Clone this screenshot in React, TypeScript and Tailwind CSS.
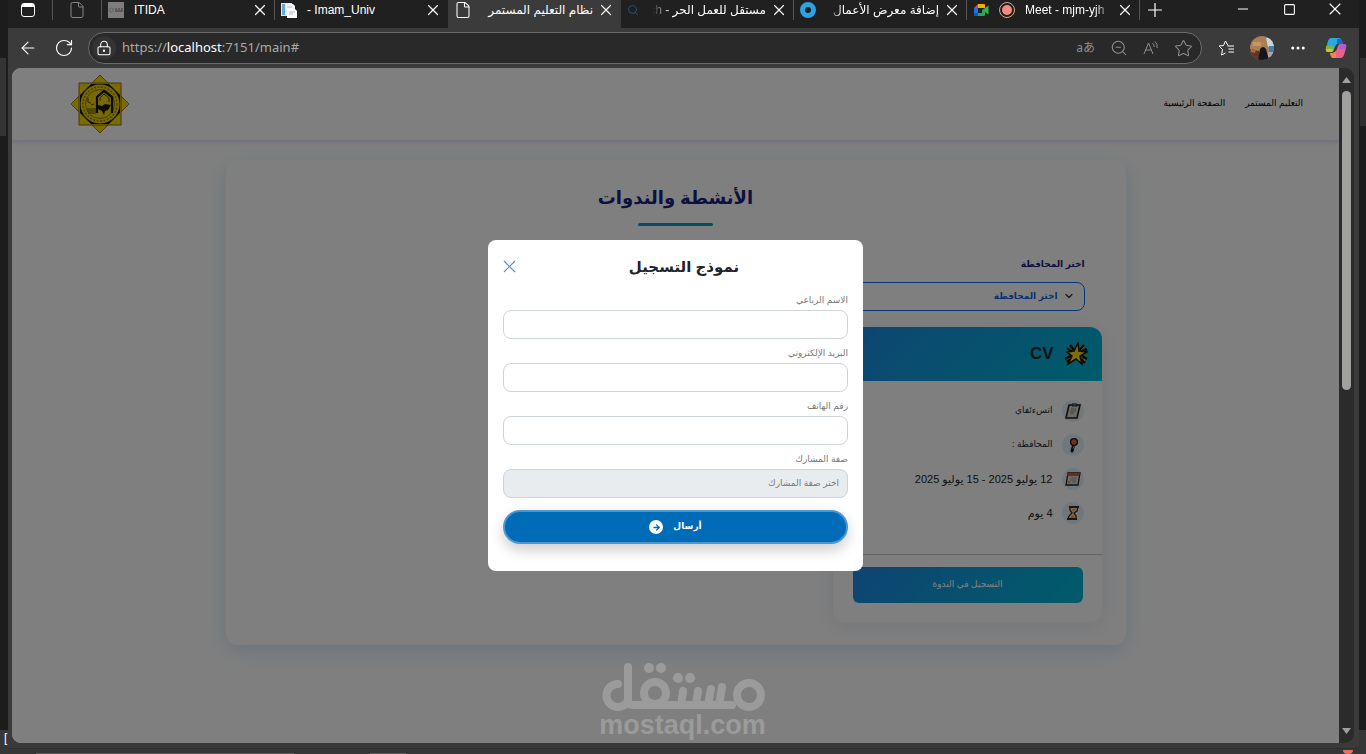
import React from "react";
import {
  ArrowLeft,
  ArrowRight,
  ChevronDown,
  File,
  LockKeyhole,
  Minus,
  MoreHorizontal,
  Plus,
  RotateCw,
  Search,
  Square,
  Star,
  X,
  ZoomOut,
} from "lucide-react";

const MeetIcon = () => (
  <svg width="16" height="16" viewBox="0 0 16 16" aria-hidden="true">
    <path d="M1 6l4-4v4z" fill="#e94235" />
    <path d="M5 2h6q1 0 1 1v3H5z" fill="#f6ad01" />
    <path d="M1 6h4v5H1z" fill="#1a73e8" />
    <path d="M1 11h4v3H2q-1 0-1-1z" fill="#1557c0" />
    <path d="M5 11h4V8l3-2v7q0 1-1 1H5z" fill="#2aa650" />
    <path d="M12 6l3.5-2.5v9L12 10z" fill="#3fae5a" />
  </svg>
);

const ItidaIcon = () => (
  <svg width="16" height="16" viewBox="0 0 16 16" aria-hidden="true">
    <path d="M0 0h16v16H0z" fill="#7d7d7d" />
    <circle cx="3.5" cy="8" r="2" fill="none" stroke="#5a5f78" />
    <path d="M7 7h2M10 7h2M13 7h2M7 9h8" stroke="#5b4a4e" strokeWidth="1.4" />
  </svg>
);

const ImamIcon = () => (
  <svg width="16" height="16" viewBox="0 0 16 16" aria-hidden="true">
    <path d="M0 1h11v13H0z" fill="#dfe8f1" />
    <path d="M1 2h3v11H1z" fill="#6ba6d6" />
    <path d="M5 2h7l2 2v4H5z" fill="#f4f6f8" />
    <path d="M6 7h8l2 2v7H6z" fill="#fafafa" />
    <path d="M6 5h5M8 10h6M8 12h4" stroke="#b4bcc6" />
  </svg>
);

const CopilotIcon = () => (
  <svg width="22" height="22" viewBox="0 0 22 22" aria-hidden="true">
    <path d="M6 1h8q2 0 3 3l1 3h-5q-2 0-3 3l-2 5H3q-3 0-2-4l2-7q1-3 3-3z" fill="#29a9e0" />
    <path d="M1 9h8l-2 6H3q-3 0-2-4z" fill="#7bb53c" />
    <path d="M1 12h7l-1 3H3q-2 0-2-3z" fill="#f0b429" />
    <path d="M12 2h3q2 0 3 5h-5l-1 2z" fill="#1769c9" />
    <path d="M16 7h3q3 0 2 4l-2 7q-1 3-3 3H8q-2 0-3-5h3q2 0 3-3l2-5q1-1 3-1z" fill="#e8628c" />
    <path d="M16 7h3q3 0 2 4v1h-7l1-4z" fill="#b05bd6" />
    <path d="M5 16h3l3-2v7H8q-2 0-3-5z" fill="#f08a3c" />
    <path d="M10 10l2-3h2l-3 7-2 1z" fill="#3a3a3a" />
  </svg>
);

const Avatar = () => (
  <svg width="24" height="24" viewBox="0 0 24 24" role="img" aria-label="Profile">
    <defs>
      <clipPath id="avatar">
        <circle cx="12" cy="12" r="12" />
      </clipPath>
    </defs>
    <g clipPath="url(#avatar)">
      <path d="M0 0h24v24H0z" fill="#a98055" />
      <path d="M16 2h8v9h-6z" fill="#c9d3dc" />
      <path d="M19 10h5v6h-5z" fill="#3f7fb5" />
      <path d="M0 13l9 2 2 9H0z" fill="#5e3a24" />
      <path d="M1 13l5 1-1 3-4-1z" fill="#b5623a" />
      <path d="M3 6h8v4H3z" fill="#c9965c" />
      <path d="M10 13q3-4 6 0l3 11H8z" fill="#16161a" />
      <path d="M18 16h5v5h-5z" fill="#a5a8ac" />
    </g>
  </svg>
);

const UniversityLogo = () => (
  <svg width="60" height="60" viewBox="0 0 60 60" role="img" aria-label="University logo">
    <path d="M30 1L59 30 30 59 1 30z" fill="#f5d800" stroke="#a8701c" />
    <path d="M9 9h42v42H9z" fill="#f5d800" stroke="#8d6a1c" />
    <path d="M21 10h18l11 11v18L39 50H21L10 39V21z" fill="#141414" />
    <circle cx="30" cy="30" r="19.5" fill="#f0d400" />
    <circle cx="30" cy="30" r="17" fill="none" stroke="#8a7b18" strokeDasharray="2 1.5" strokeWidth="1.5" />
    <circle cx="30" cy="30" r="14.5" fill="#f0d400" stroke="#8a7b18" />
    <path d="M27 39V23l7-6 8 6v16" fill="none" stroke="#141414" strokeWidth="2.2" />
    <path d="M30 27v-3l4-4 5 4v4" fill="none" stroke="#5a4f10" />
    <path d="M28 31l4 1 3-2 6 1-3 5-3 1-1 4-2-4-4-2z" fill="#141414" />
    <path d="M18 24v4l3 1M21 31l3-1M17 35h9M17 37h9M18 39h8" stroke="#5a4f10" fill="none" />
  </svg>
);

const SparkIcon = () => (
  <svg width="24" height="24" viewBox="0 0 24 24" aria-hidden="true">
    <path d="M3 6l5 3M6 3l4 5M20 3l-4 5M23 7l-5 2M1 17l6-3M3 20l5-5M17 17l4 4M18 14l5 3" stroke="#1a1200" strokeWidth="2.6" />
    <path d="M4 5l5 4M20 5l-3 3M3 18l5-3M18 16l3 3" stroke="#c9801d" strokeWidth="1" />
    <path
      d="M14 1l1 8 8 1-7 4 2 8-6-5-8 5 4-8-5-4 7-1z"
      fill="#ffd91f"
      stroke="#1a1200"
      strokeWidth="1.5"
    />
  </svg>
);

const ClipboardIcon = () => (
  <svg width="16" height="16" viewBox="0 0 16 16" aria-hidden="true">
    <path d="M4 2h11l-3 13H1z" fill="#d8d4cc" stroke="#2d1c12" strokeWidth="1.6" />
    <path d="M7 1h5v2H7z" fill="#9a9a9a" stroke="#222" />
    <path d="M6 6h5M5 8h6M5 10h4" stroke="#8a8a8a" />
  </svg>
);

const PinIcon = () => (
  <svg width="16" height="16" viewBox="0 0 16 16" aria-hidden="true">
    <path d="M9 7L7 14" stroke="#111" strokeWidth="3" strokeLinecap="round" />
    <circle cx="9" cy="5" r="3.4" fill="#f0603c" stroke="#201010" strokeWidth="1.4" />
    <path d="M9 9l-1 3" stroke="#aaa" />
  </svg>
);

const CalendarIcon = () => (
  <svg width="16" height="16" viewBox="0 0 16 16" aria-hidden="true">
    <path d="M3 2h12l-2 12H1z" fill="#dcd8d4" stroke="#222" strokeWidth="1.3" />
    <path d="M3 2h12l-1 3H2z" fill="#d8523a" />
    <path d="M6 7h6M5 9h6M7 11h4" stroke="#999" />
    <path d="M3 10h2v2H3z" fill="#ef8b38" />
  </svg>
);

const HourglassIcon = () => (
  <svg width="16" height="16" viewBox="0 0 16 16" aria-hidden="true">
    <path d="M5 2h8l-1 4-3 2 2 3v3H3l1-3 3-3-2-3z" fill="#f0d9b8" stroke="#4a2410" strokeWidth="1.3" />
    <path d="M4 2h10M2 14h10" stroke="#4a2410" strokeWidth="2" />
    <path d="M7 4h4L8 7zM5 13l3-3 2 3z" fill="#f0a52c" />
  </svg>
);

const WatermarkLogo = () => (
  <svg width="166" height="50" viewBox="0 0 166 50" aria-hidden="true">
    <g fill="none" stroke="#9b9b9b" strokeWidth="8" strokeLinecap="round">
      <path d="M18 22a11.500 11.500 0 1 0 10 17M28 5v34q0 4 5 4h99" />
      <circle cx="55" cy="31" r="11" />
      <circle cx="149" cy="33" r="12" />
      <path d="M83 29l-2 14M98 29l-2 14M111 27l-3 16M122 25l-3 18" />
    </g>
    <g fill="#9b9b9b">
      <circle cx="49" cy="6" r="5" />
      <circle cx="61" cy="6" r="5" />
      <circle cx="78" cy="16" r="5" />
      <circle cx="90" cy="16" r="5" />
    </g>
  </svg>
);

const tabs = [
  { id: "itida", title: "ITIDA", divider: true, icon: <ItidaIcon /> },
  { id: "imam", title: "- Imam_Univ", icon: <ImamIcon /> },
  {
    id: "system",
    title: "نظام التعليم المستمر",
    rtl: true,
    active: true,
    icon: <File size={18} strokeWidth={1.4} />,
  },
  {
    id: "mostaql",
    title: "مستقل للعمل الحر - ch",
    rtl: true,
    faded: true,
    divider: true,
    icon: <Search size={12} className="text-[#1c5480]" />,
  },
  {
    id: "portfolio",
    title: "إضافة معرض الأعمال",
    rtl: true,
    faded: true,
    divider: true,
    icon: <span className="block size-4 rounded-full border-[5px] border-[#2ba3e3]" />,
  },
  {
    id: "meet",
    title: "Meet - mjm-yjh",
    faded: true,
    divider: true,
    icon: (
      <>
        <MeetIcon />
        <span className="flex size-4 items-center justify-center rounded-full border border-[#e0a183]">
          <span className="size-2.5 rounded-full bg-[#f28b82]" />
        </span>
      </>
    ),
  },
];

const details = [
  { id: "about", text: "اتسءئفاي", size: "text-[9px]", icon: <ClipboardIcon /> },
  { id: "city", text: "المحافظة :", size: "text-[9px]", icon: <PinIcon /> },
  { id: "dates", text: "12 يوليو 2025 - 15 يوليو 2025", size: "text-[11px]", icon: <CalendarIcon /> },
  { id: "length", text: "4 يوم", size: "text-[11px]", icon: <HourglassIcon /> },
];

const fields = [
  { id: "full-name", label: "الاسم الرباعي", type: "text" },
  { id: "email", label: "البريد الإلكتروني", type: "email" },
  { id: "phone", label: "رقم الهاتف", type: "tel" },
];

const tabTitleClass = (tab) => {
  if (!tab.faded) return "min-w-0 flex-1 whitespace-nowrap text-xs";
  return tab.rtl
    ? "min-w-0 flex-1 whitespace-nowrap text-xs mask-l-from-85%"
    : "min-w-0 flex-1 whitespace-nowrap text-xs mask-r-from-80%";
};

const TabStrip = () => (
  <div className="flex h-7 items-start bg-[#202020] text-white">
    <button aria-label="Tab actions" className="flex h-5 w-[45px] items-center justify-center border-r border-[#555] pr-1">
      <svg width="14" height="14" viewBox="0 0 14 14">
        <rect x="0.5" y="0.5" width="13" height="13" rx="2.5" fill="none" stroke="#fff" />
        <path d="M1 1h12v3H1z" fill="#fff" />
      </svg>
    </button>
    <button aria-label="Pinned tab" className="flex h-5 w-[49px] items-center justify-center border-r border-[#555] text-[#8a8a8a]">
      <File size={18} strokeWidth={1.3} />
    </button>
    {tabs.map((tab) => (
      <div
        key={tab.id}
        className={
          tab.active
            ? "flex h-7 w-[173px] items-start bg-[#3b3b3b]"
            : "flex h-7 w-[173px] items-start"
        }
      >
        <div
          className={
            tab.divider
              ? "flex h-5 w-full items-center gap-2.5 border-r border-[#555] pr-2 pl-1.5"
              : "flex h-5 w-full items-center gap-2.5 pr-[9px] pl-1.5"
          }
        >
          <span className="flex min-w-4 shrink-0 items-center gap-2.5">{tab.icon}</span>
          <span dir={tab.rtl ? "rtl" : "ltr"} className={tabTitleClass(tab)}>
            {tab.title}
          </span>
          <button aria-label="Close tab" className="-mr-[3px] -ml-1.5 shrink-0">
            <X size={18} strokeWidth={1.6} />
          </button>
        </div>
      </div>
    ))}
    <button aria-label="New tab" className="ml-1 flex h-5 items-center">
      <Plus size={22} strokeWidth={1.3} />
    </button>
    <div className="ml-auto flex h-[18px] items-center pr-px">
      <button aria-label="Minimize" className="flex w-[46px] justify-center">
        <Minus size={16} strokeWidth={1.5} />
      </button>
      <button aria-label="Maximize" className="flex w-[46px] justify-center">
        <Square size={13} strokeWidth={2} />
      </button>
      <button aria-label="Close" className="flex w-[46px] justify-center">
        <X size={20} strokeWidth={1.4} />
      </button>
    </div>
  </div>
);

const Toolbar = () => (
  <div className="flex h-10 items-center pr-3 pl-2.5 text-white">
    <button aria-label="Back" className="flex w-5 justify-center">
      <ArrowLeft size={22} strokeWidth={1.3} />
    </button>
    <button aria-label="Refresh" className="mr-3.5 ml-4 flex w-5 justify-center">
      <RotateCw size={20} strokeWidth={1.4} />
    </button>
    <div className="flex h-8 flex-1 items-center rounded-full border border-[#6b6b6b] bg-[#292929] pr-2 pl-[3px] text-[#8f8f8f]">
      <span className="flex size-6 items-center justify-center rounded-full bg-[#333] text-white">
        <LockKeyhole size={16} strokeWidth={1.6} />
      </span>
      <input
        aria-label="Address"
        type="text"
        className="sr-only"
        defaultValue="https://localhost:7151/main#"
      />
      <span className="ml-1.5 flex-1 font-['Noto_Sans',sans-serif] text-[13px] text-[#a9a9a9]">
        https://<span className="text-white">localhost</span>:7151/main#
      </span>
      <div className="flex items-center gap-[15px]">
        <button aria-label="Translate" className="font-['Noto_Sans','Noto_Sans_CJK_JP',sans-serif] text-xs">
          aあ
        </button>
        <button aria-label="Zoom">
          <ZoomOut size={18} strokeWidth={1.4} />
        </button>
        <button aria-label="Read aloud">
          <svg width="16" height="16" viewBox="0 0 16 16" fill="none" stroke="currentColor">
            <path d="M1 14L5.5 3 10 14M2.6 10h5.8M9.5 3q2 1.5 1.5 4M12 1.500q3 2.500 2 6.500" />
          </svg>
        </button>
        <button aria-label="Add to favorites">
          <Star size={19} strokeWidth={1.3} />
        </button>
      </div>
    </div>
    <div className="ml-4 flex items-center gap-[15px]">
      <button aria-label="Favorites">
        <svg width="17" height="17" viewBox="0 0 17 17" fill="none" stroke="currentColor" strokeLinejoin="round">
          <path d="M10 5.500L7.500 1 5.500 5.500 1 6l3.500 3.500L3.500 15l4-2M9.500 6H16M10.500 9H16M10.500 12H16" />
        </svg>
      </button>
      <button aria-label="Profile">
        <Avatar />
      </button>
      <button aria-label="Settings">
        <MoreHorizontal size={18} strokeWidth={2} />
      </button>
      <button aria-label="Copilot" className="ml-[3px]">
        <CopilotIcon />
      </button>
    </div>
  </div>
);

const SeminarCard = () => (
  <article className="w-[269px] overflow-hidden rounded-xl bg-white shadow-[0_4px_20px_rgba(0,60,130,0.1)]">
    <header className="flex h-[54px] items-center gap-2.5 bg-linear-135 from-[#1e88e5] to-[#00b8d4] px-3.5">
      <SparkIcon />
      <h3 className="text-[17px] font-bold text-[#212529]">CV</h3>
    </header>
    <ul className="flex flex-col gap-3 px-[18px] pt-[19px] pb-[30px] text-[#212529]">
      {details.map((item) => (
        <li key={item.id} className="flex h-[22px] items-center gap-[9px]">
          <span className="flex size-[22px] items-center justify-center rounded-full bg-[#e3f0fa]">{item.icon}</span>
          <span className={item.size}>{item.text}</span>
        </li>
      ))}
    </ul>
    <footer className="border-t border-[#c8c8c8] pt-3 pr-[19px] pb-[19px] pl-5">
      <button className="h-9 w-full rounded-md bg-linear-135 from-[#1e88e5] to-[#00b8d4] text-[9px] text-white">
        التسجيل في الندوة
      </button>
    </footer>
  </article>
);

const RegisterDialog = () => (
  <div
    role="dialog"
    aria-labelledby="register-title"
    className="w-[375px] rounded-lg bg-white px-[15px] pt-3 pb-[27px] text-[#777]"
  >
    <div className="flex h-[30px] items-center">
      <h2 id="register-title" className="flex-1 text-center text-[15px] font-bold text-[#212529]">
        نموذج التسجيل
      </h2>
      <button aria-label="إغلاق" className="-ml-1 pb-0.5 text-[#5b8fc7]">
        <X size={21} strokeWidth={1.3} />
      </button>
    </div>
    <form className="mt-2.5">
      {fields.map((field) => (
        <div key={field.id} className="mb-1.5">
          <label htmlFor={field.id} className="block h-[18px] text-[9px] leading-4">
            {field.label}
          </label>
          <input
            id={field.id}
            type={field.type}
            className="block h-[29px] w-full rounded-lg border border-[#ced4da] px-2.5 text-xs"
          />
        </div>
      ))}
      <label htmlFor="role" className="block h-[18px] text-[9px] leading-4">
        صفة المشارك
      </label>
      <select
        id="role"
        disabled
        className="block h-[29px] w-full appearance-none rounded-lg border border-[#ced4da] bg-[#e9ecef] px-2 text-[9px] opacity-100"
      >
        <option>اختر صفة المشارك</option>
      </select>
      <button
        type="button"
        className="mt-3 flex h-[34px] w-full items-center justify-center gap-2.5 rounded-full border-2 border-[#4d97cd] bg-[#006bb6] text-[9px] font-bold text-white shadow-[0_6px_14px_rgba(0,0,0,0.2)]"
      >
        أرسال
        <span className="flex size-3.5 items-center justify-center rounded-full bg-white text-[#006bb6]">
          <ArrowRight size={9} strokeWidth={3.5} />
        </span>
      </button>
    </form>
  </div>
);

const SitePage = () => (
  <div dir="rtl" className="relative flex min-w-0 flex-1 flex-col bg-white">
    <header className="flex h-[72px] items-center justify-between pr-9 pl-[58px] shadow-[0_2px_4px_rgba(30,50,160,0.15)]">
      <nav className="flex gap-5 text-[9px] text-black">
        <a href="#main">التعليم المستمر</a>
        <a href="#home">الصفحة الرئيسية</a>
      </nav>
      <UniversityLogo />
    </header>

    <main className="mx-auto mt-5 w-[900px] max-w-full rounded-xl bg-white px-6 pt-5 pb-[23px] shadow-[0_6px_20px_rgba(40,140,200,0.2)]">
      <h1 className="text-center text-lg leading-9 font-bold text-[#1a237e]">الأنشطة والندوات</h1>
      <div className="mx-auto mt-[7px] h-[3px] w-[75px] rounded-full bg-linear-to-r from-[#1890e0] to-[#00a5b5]" />
      <div className="mt-7 mr-[17px] w-[232px]">
        <label htmlFor="city" className="block h-[28px] text-[9px] leading-5 font-bold text-[#1a237e]">
          اختر المحافظة
        </label>
        <div className="relative">
          <select
            id="city"
            className="block h-[29px] w-full appearance-none rounded-lg border border-[#0d6efd] bg-white pr-[26px] text-[9px] font-bold text-[#0d66e8]"
          >
            <option>اختر المحافظة</option>
          </select>
          <ChevronDown size={12} strokeWidth={2.5} className="pointer-events-none absolute top-2 right-2.5 text-[#333]" />
        </div>
      </div>
      <div className="mt-4">
        <SeminarCard />
      </div>
    </main>

    <div className="absolute inset-0 flex items-start justify-center bg-black/50 pt-[172px]">
      <RegisterDialog />
    </div>

    <div className="absolute inset-x-0 bottom-1 flex flex-col items-center pl-[14px] text-[#9b9b9b]">
      <WatermarkLogo />
      <span className="text-[27px] leading-[27px] font-bold">mostaql.com</span>
    </div>
  </div>
);

const Scrollbar = () => (
  <div className="flex w-[15px] shrink-0 flex-col items-center bg-[#2b2b2b] py-2 text-[#a0a09e]">
    <svg width="9" height="7" viewBox="0 0 9 7">
      <path d="M4.500 1L9 7H0z" fill="currentColor" />
    </svg>
    <div className="mt-2 h-[299px] w-[9px] rounded-full bg-current" />
    <svg width="9" height="7" viewBox="0 0 9 7" className="mt-auto">
      <path d="M0 0h9L4.500 6z" fill="currentColor" />
    </svg>
  </div>
);

export default function App() {
  return (
    <div className="flex min-h-screen bg-[#1c1c1c] font-['Liberation_Sans','DejaVu_Sans',sans-serif]">
      <div className="flex w-2 shrink-0 flex-col justify-between pt-[58px]">
        <div className="h-[78px] w-1.5 bg-[#343434]" />
        <div className="h-6 bg-[#373737] pl-1 text-xs text-white">[</div>
      </div>
      <div className="flex min-w-0 flex-1 flex-col bg-[#3b3b3b]">
        <TabStrip />
        <Toolbar />
        <div className="mr-[5px] ml-1 flex flex-1 overflow-hidden rounded-[9px]">
          <SitePage />
          <Scrollbar />
        </div>
        <div className="h-[5px] bg-[#3a3a3a]" />
        <div className="flex h-1.5 items-end gap-[76px] border-t border-[#2e2e2e] bg-[#373737] pl-7">
          <span className="h-px w-[258px] bg-[#5a5a5a]" />
          <span className="h-px w-9 bg-[#5a5a5a]" />
          <span className="mr-1.5 ml-auto h-1 w-2.5 rounded-b-full bg-[#e0705f]" />
        </div>
      </div>
      <div className="flex w-[7px] shrink-0 flex-col justify-between pt-[58px]">
        <div className="ml-px h-[68px] bg-[#303030]" />
        <div className="h-6 bg-[#373737]" />
      </div>
    </div>
  );
}
